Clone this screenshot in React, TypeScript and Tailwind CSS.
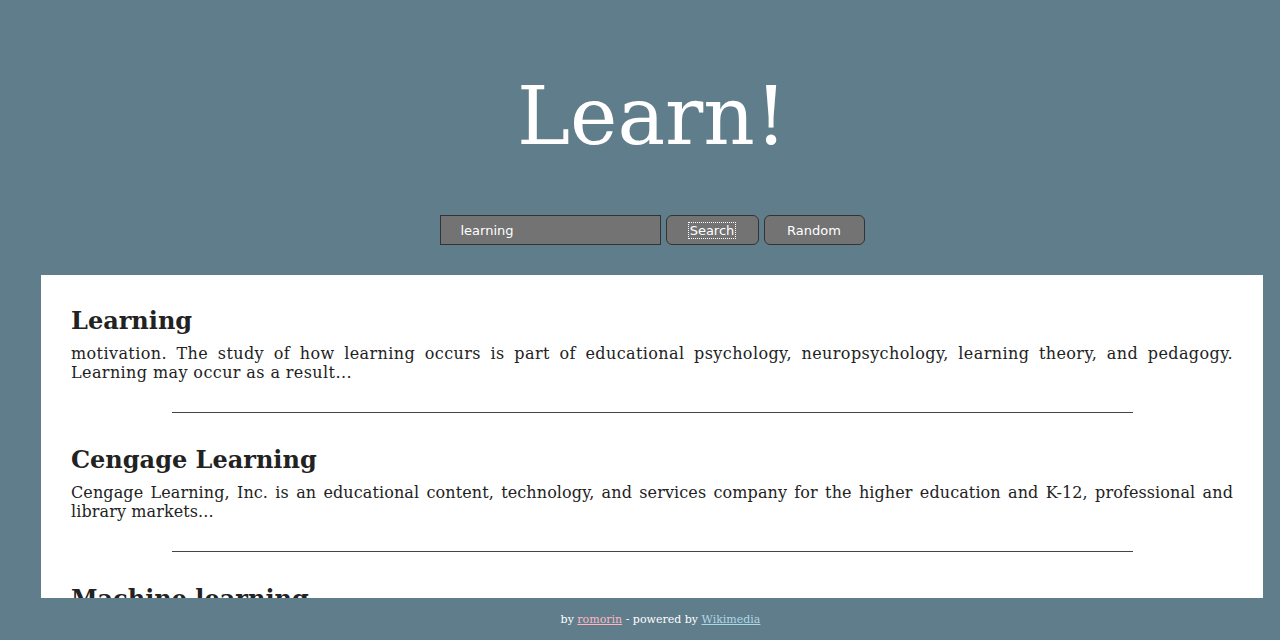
import React from "react";

const results = [
  {
    title: "Learning",
    text: "motivation. The study of how learning occurs is part of educational psychology, neuropsychology, learning theory, and pedagogy. Learning may occur as a result...",
    track: "tracking-[0.4px]",
  },
  {
    title: "Cengage Learning",
    text: "Cengage Learning, Inc. is an educational content, technology, and services company for the higher education and K-12, professional and library markets...",
    track: "tracking-[0.1px]",
  },
  {
    title: "Machine learning",
    text: "Machine learning is the subfield of computer science that gives computers the ability to learn without being explicitly programmed...",
    track: "tracking-[0.4px]",
  },
];

export default function App() {
  return (
    <div className="min-h-screen bg-[#607d8b] font-['DejaVu_Serif',serif] pb-[60px]">
      <div className="ml-[41px] mr-[17px]">
        <h1 className="text-white text-[80px] leading-[93px] text-center pt-[70px] m-0">Learn!</h1>
        <div className="flex justify-center items-center gap-[5px] mt-[52px] font-['DejaVu_Sans',sans-serif] text-[13px] text-white">
          <div className="w-[221px] h-[30px] bg-[#737373] border border-[#333] flex items-center pl-[20px] pt-[1px]">learning</div>
          <button className="w-[93px] h-[30px] bg-[#737373] border border-[#333] rounded-[6px] flex items-center justify-center pt-[1px]">
            <span className="outline outline-1 outline-dotted outline-white px-[1px] leading-[15px]">Search</span>
          </button>
          <button className="w-[101px] h-[30px] bg-[#737373] border border-[#333] rounded-[6px] flex items-center justify-center pt-[1px]">Random</button>
        </div>
        <main className="bg-white mt-[30px] px-[30px] pt-[28px] pb-[20px]">
          {results.map((r, i) => (
            <section key={i}>
              <h2 className="text-[24px] font-bold text-[#222] leading-[36px] m-0">{r.title}</h2>
              <p className={`text-[16px] text-[#222] leading-[19px] text-justify mt-[5px] ${r.track}`}>{r.text}</p>
              <hr className="w-[961px] mx-auto border-0 border-t border-[#444] mt-[30px] mb-[29px]" />
            </section>
          ))}
        </main>
      </div>
      <footer className="fixed bottom-0 left-[41px] right-0 h-[42px] bg-[#607d8b] flex items-center justify-center text-[11px] text-white pt-[3px]">
        <span>
          by <a className="text-[#ffb6c1] underline" href="#">romorin</a> - powered by{" "}
          <a className="text-[#add8e6] underline" href="#">Wikimedia</a>
        </span>
      </footer>
      <div className="fixed bottom-0 left-0 w-[41px] h-[42px] bg-[#607d8b]" />
    </div>
  );
}
